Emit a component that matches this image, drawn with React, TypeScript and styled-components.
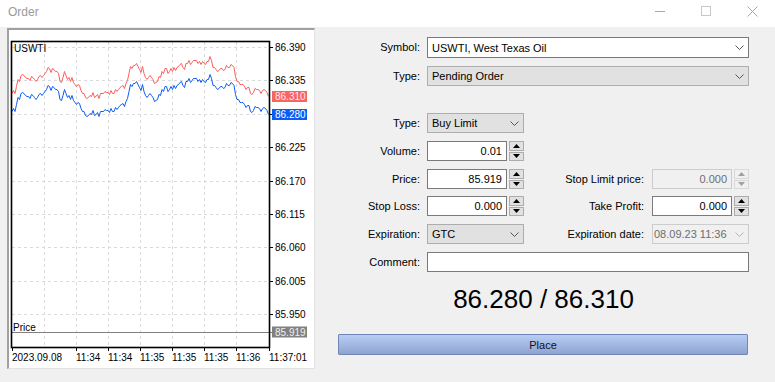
import React from 'react'
import styled, { createGlobalStyle } from 'styled-components'

const GlobalStyle = createGlobalStyle`
  html, body {
    margin: 0;
    padding: 0;
    background: #f0f0f0;
  }
  body {
    font-family: "Liberation Sans", Arial, sans-serif;
    font-size: 11px;
    color: #000;
  }
`

const Window = styled.div`
  width: 775px;
  height: 382px;
  display: flex;
  flex-direction: column;
  background: #f0f0f0;
  overflow: hidden;
`

const TitleBar = styled.div`
  height: 27px;
  flex-shrink: 0;
  background: #fff;
  display: flex;
  align-items: flex-start;
`

const Title = styled.div`
  flex: 1;
  padding: 5px 0 0 8px;
  font-size: 12px;
  line-height: 15px;
  color: #9a9a9a;
`

const CaptionButton = styled.div`
  width: 46px;
  height: 22px;
  display: flex;
  align-items: center;
  justify-content: center;
`

const Body = styled.div`
  display: flex;
  gap: 23px;
  padding: 1px 0 0 7px;
`

const ChartFrame = styled.div`
  width: 305px;
  height: 338px;
  background: #fff;
  border-top: 2px solid #a0a0a0;
  border-left: 2px solid #a0a0a0;
  border-right: 1px solid #e3e3e3;
  border-bottom: 1px solid #e3e3e3;
  svg {
    display: block;
  }
`

const Panel = styled.div`
  width: 411px;
  padding-top: 9px;
  display: flex;
  flex-direction: column;
`

const FormGrid = styled.div`
  display: grid;
  grid-template-columns: 89px 97px 128px 97px;
  grid-template-rows: 29px 47px 28px 28px 27px 28px 28px 20px;
  align-items: start;
`

const Label = styled.div<{ $pad: number }>`
  height: 20px;
  display: flex;
  align-items: center;
  justify-content: flex-end;
  padding-right: ${(p) => p.$pad}px;
  white-space: nowrap;
`

type Tone = 'white' | 'grey' | 'disabled'

const toneBg: Record<Tone, string> = { white: '#fff', grey: '#e1e1e1', disabled: '#f0f0f0' }
const toneBorder: Record<Tone, string> = { white: '#7a7a7a', grey: '#adadad', disabled: '#cccccc' }

const SelectBox = styled.div<{ $tone: Tone; $h?: number; $span?: boolean }>`
  grid-column: ${(p) => (p.$span ? '2 / 5' : 'auto')};
  height: ${(p) => p.$h ?? 20}px;
  box-sizing: border-box;
  background: ${(p) => toneBg[p.$tone]};
  border: 1px solid ${(p) => toneBorder[p.$tone]};
  color: ${(p) => (p.$tone === 'disabled' ? '#6d6d6d' : '#000')};
  display: flex;
  align-items: center;
  justify-content: space-between;
  padding: 0 4px 0 ${(p) => (p.$tone === 'disabled' ? 1 : 4)}px;
  white-space: nowrap;
`

const SpinRow = styled.div`
  display: flex;
  gap: 2px;
  height: 20px;
`

const NumberBox = styled.div<{ $disabled?: boolean }>`
  flex: 1;
  box-sizing: border-box;
  height: 20px;
  background: ${(p) => (p.$disabled ? '#f0f0f0' : '#fff')};
  border: 1px solid ${(p) => (p.$disabled ? '#cccccc' : '#7a7a7a')};
  color: ${(p) => (p.$disabled ? '#6d6d6d' : '#000')};
  display: flex;
  align-items: center;
  justify-content: flex-end;
  padding-right: 4px;
`

const Spin = styled.div`
  width: 15px;
  display: flex;
  flex-direction: column;
  gap: 1px;
`

const SpinButton = styled.div<{ $disabled?: boolean }>`
  flex: 1;
  box-sizing: border-box;
  background: ${(p) => (p.$disabled ? '#f0f0f0' : '#e1e1e1')};
  border: 1px solid ${(p) => (p.$disabled ? '#d9d9d9' : '#adadad')};
  display: flex;
  align-items: center;
  justify-content: center;
`

const CommentBox = styled.div`
  grid-column: 2 / 5;
  height: 20px;
  box-sizing: border-box;
  background: #fff;
  border: 1px solid #7a7a7a;
`

const Quote = styled.div`
  margin-top: 13px;
  text-align: center;
  font-size: 26px;
  line-height: 29px;
`

const PlaceButton = styled.div`
  margin-top: 20px;
  width: 410px;
  height: 21px;
  box-sizing: border-box;
  border: 1px solid #7186b4;
  border-radius: 1px;
  background: linear-gradient(#b8cdf4, #8ea3d0);
  display: flex;
  align-items: center;
  justify-content: center;
  color: #111;
`

const Chevron = ({ disabled }: { disabled?: boolean }) => (
  <svg width="9" height="5" viewBox="0 0 9 5">
    <polyline points="0.5,0.5 4.5,4.5 8.5,0.5" fill="none" stroke={disabled ? '#b5b5b5' : '#555'} strokeWidth="1" />
  </svg>
)

const Arrow = ({ up, disabled }: { up?: boolean; disabled?: boolean }) => (
  <svg width="7" height="4" viewBox="0 0 7 4">
    <polygon points={up ? '0,4 7,4 3.5,0' : '0,0 7,0 3.5,4'} fill={disabled ? '#a0a0a0' : '#000'} />
  </svg>
)

const Select = ({ value, tone, span, h }: { value: string; tone: Tone; span?: boolean; h?: number }) => (
  <SelectBox $tone={tone} $span={span} $h={h}>
    <span>{value}</span>
    <Chevron disabled={tone === 'disabled'} />
  </SelectBox>
)

const Stepper = ({ value, disabled }: { value: string; disabled?: boolean }) => (
  <SpinRow>
    <NumberBox $disabled={disabled}>{value}</NumberBox>
    <Spin>
      <SpinButton $disabled={disabled}>
        <Arrow up disabled={disabled} />
      </SpinButton>
      <SpinButton $disabled={disabled}>
        <Arrow disabled={disabled} />
      </SpinButton>
    </Spin>
  </SpinRow>
)

// chart drawn in page coordinates (frame inner origin is 9,30)
const levels = ['86.390', '86.335', '86.280', '86.225', '86.170', '86.115', '86.060', '86.005', '85.950']
const levelY = (i: number) => Math.round(47 + i * 33.4) + 0.5
const vGrid = [44, 76, 108, 140, 172, 204, 236]
const times: [number, string][] = [
  [12, '2023.09.08'],
  [76, '11:34'],
  [108, '11:34'],
  [140, '11:35'],
  [172, '11:35'],
  [204, '11:35'],
  [236, '11:36'],
  [269, '11:37:01'],
]

const keys: [number, number][] = [
  [12, 93], [15, 93], [18, 82], [22, 73], [25, 77], [28, 80], [33, 78], [37, 80], [40, 77], [43, 75],
  [48, 69], [53, 71], [57, 70], [60, 82], [65, 73], [68, 77], [72, 80], [75, 82], [80, 87], [85, 93],
  [88, 98], [92, 95], [97, 94], [100, 97], [103, 90], [108, 92], [113, 90], [118, 89], [123, 88],
  [127, 84], [130, 67], [133, 68], [137, 64], [140, 70], [143, 68], [147, 77], [152, 75], [155, 85],
  [158, 80], [162, 71], [167, 70], [172, 69], [177, 67], [182, 65], [185, 67], [188, 60], [193, 63],
  [198, 63], [203, 62], [207, 61], [211, 57], [213, 67], [217, 72], [220, 68], [223, 70], [227, 67],
  [232, 63], [235, 72], [237, 82], [242, 85], [247, 87], [252, 92], [255, 90], [260, 91], [263, 88],
  [267, 92], [269, 97],
]

const buildSeries = (offset: number) => {
  let seed = 11
  const rnd = () => {
    seed = (seed * 16807) % 2147483647
    return seed / 2147483647
  }
  const pts: string[] = []
  let k = 0
  for (let x = 12; x <= 269; x += 1.5) {
    while (k < keys.length - 2 && keys[k + 1][0] < x) k++
    const [x0, y0] = keys[k]
    const [x1, y1] = keys[k + 1]
    const t = Math.min(1, Math.max(0, (x - x0) / (x1 - x0)))
    const edge = x < 13 || x > 268
    const y = y0 + (y1 - y0) * t + (edge ? 0 : (rnd() - 0.5) * 6)
    pts.push(`${x.toFixed(1)},${(Math.round(y) + offset + 0.5).toFixed(1)}`)
  }
  return pts.join(' ')
}

const askLine = buildSeries(0)
const bidLine = buildSeries(18)

const axisText = {
  fontFamily: '"Liberation Sans", Arial, sans-serif',
  fontSize: 10,
  dominantBaseline: 'central' as const,
}

const PriceTag = ({ y, value, bg, fg }: { y: number; value: string; bg: string; fg: string }) => (
  <g>
    <rect x={272} y={y - 5.5} width={35} height={11} fill={bg} />
    <text x={275} y={y} fill={fg} {...axisText}>
      {value}
    </text>
  </g>
)

const Chart = () => (
  <svg width="305" height="338" viewBox="9 30 305 338">
    <g stroke="#dadada" strokeDasharray="3 3" shapeRendering="crispEdges">
      {levels.map((_, i) => (
        <line key={i} x1={12} x2={269} y1={levelY(i)} y2={levelY(i)} />
      ))}
      {vGrid.map((x) => (
        <line key={x} x1={x + 0.5} x2={x + 0.5} y1={42} y2={347} />
      ))}
    </g>
    <line x1={12} x2={272} y1={332.5} y2={332.5} stroke="#808080" shapeRendering="crispEdges" />
    <polyline points={askLine} fill="none" stroke="#ff5c5c" strokeWidth="1" />
    <polyline points={bidLine} fill="none" stroke="#0a5cf5" strokeWidth="1" />
    <rect x={11.5} y={41.5} width={258} height={306} fill="none" stroke="#000" strokeWidth="1.6" />
    <g stroke="#000" shapeRendering="crispEdges">
      {levels.map((_, i) => (
        <line key={i} x1={269} x2={273} y1={levelY(i)} y2={levelY(i)} />
      ))}
      {times.map(([x]) => (
        <line key={x} x1={x + 0.5} x2={x + 0.5} y1={347} y2={351} />
      ))}
    </g>
    {levels.map((v, i) =>
      i === 2 ? null : (
        <text key={v} x={275} y={levelY(i)} fill="#000" {...axisText}>
          {v}
        </text>
      ),
    )}
    {times.map(([x, t], i) => (
      <text key={i} x={x} y={357} fill="#000" {...axisText}>
        {t}
      </text>
    ))}
    <text x={14} y={48} fill="#000" {...axisText}>
      USWTI
    </text>
    <text x={13} y={327} fill="#000" {...axisText}>
      Price
    </text>
    <PriceTag y={96.5} value="86.310" bg="#f76464" fg="#ffe8e8" />
    <PriceTag y={114.5} value="86.280" bg="#0a5cf5" fg="#ffffff" />
    <PriceTag y={332} value="85.919" bg="#808080" fg="#f0f0f0" />
  </svg>
)

const App = () => (
  <Window>
    <GlobalStyle />
    <TitleBar>
      <Title>Order</Title>
      <CaptionButton>
        <svg width="10" height="1" viewBox="0 0 10 1">
          <rect width="10" height="1" fill="#a8a8a8" />
        </svg>
      </CaptionButton>
      <CaptionButton>
        <svg width="10" height="10" viewBox="0 0 10 10">
          <rect x="0.5" y="0.5" width="9" height="9" fill="none" stroke="#c8c8c8" />
        </svg>
      </CaptionButton>
      <CaptionButton>
        <svg width="11" height="11" viewBox="0 0 11 11">
          <path d="M0.5 0.5 L10.5 10.5 M10.5 0.5 L0.5 10.5" stroke="#a8a8a8" strokeWidth="1" />
        </svg>
      </CaptionButton>
    </TitleBar>
    <Body>
      <ChartFrame>
        <Chart />
      </ChartFrame>
      <Panel>
        <FormGrid>
          <Label $pad={7}>Symbol:</Label>
          <Select value="USWTI, West Texas Oil" tone="white" span h={21} />

          <Label $pad={7}>Type:</Label>
          <Select value="Pending Order" tone="grey" span />

          <Label $pad={7}>Type:</Label>
          <Select value="Buy Limit" tone="grey" />
          <div />
          <div />

          <Label $pad={7}>Volume:</Label>
          <Stepper value="0.01" />
          <div />
          <div />

          <Label $pad={7}>Price:</Label>
          <Stepper value="85.919" />
          <Label $pad={8}>Stop Limit price:</Label>
          <Stepper value="0.000" disabled />

          <Label $pad={7}>Stop Loss:</Label>
          <Stepper value="0.000" />
          <Label $pad={8}>Take Profit:</Label>
          <Stepper value="0.000" />

          <Label $pad={7}>Expiration:</Label>
          <Select value="GTC" tone="grey" />
          <Label $pad={8}>Expiration date:</Label>
          <Select value="08.09.23 11:36" tone="disabled" />

          <Label $pad={7}>Comment:</Label>
          <CommentBox />
        </FormGrid>
        <Quote>86.280 / 86.310</Quote>
        <PlaceButton>Place</PlaceButton>
      </Panel>
    </Body>
  </Window>
)

export default App
